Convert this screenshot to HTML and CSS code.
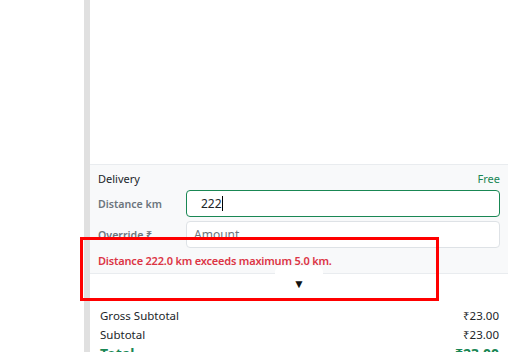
FILE: index.html
```html
<!DOCTYPE html>
<html>
<head>
<meta charset="utf-8">
<link rel="stylesheet" href="styles.css">
</head>
<body>
<div class="app">
  <div class="left"></div>
  <div class="divider"></div>
  <div class="panel">
    <div class="spacer"></div>
    <section class="delivery">
      <div class="head-row">
        <span class="title">Delivery</span>
        <span class="free">Free</span>
      </div>
      <div class="field-row">
        <span class="label">Distance km</span>
        <div class="input focused"><span class="val">222</span><span class="caret"></span></div>
      </div>
      <div class="field-row">
        <span class="label">Override ₹</span>
        <div class="input"><span class="ph">Amount</span></div>
      </div>
      <div class="error">Distance 222.0 km exceeds maximum 5.0 km.</div>
    </section>
    <div class="totals">
      <div class="trow"><span>Gross Subtotal</span><span>₹23.00</span></div>
      <div class="trow"><span>Subtotal</span><span>₹23.00</span></div>
      <div class="trow total"><span>Total</span><span>₹23.00</span></div>
    </div>
  </div>
</div>
<div class="scroll-btn">▼</div>
<div class="highlight"></div>
</body>
</html>
```
FILE: styles.css
```css
html, body {
  margin: 0;
  padding: 0;
  background: #fff;
  overflow: hidden;
}
body {
  width: 508px;
  height: 352px;
  font-family: "Noto Sans", "Open Sans", sans-serif;
  font-size: 12px;
  color: #212529;
  position: relative;
}
.app {
  display: flex;
  height: 352px;
}
.left {
  width: 84px;
  flex: none;
}
.divider {
  width: 6px;
  flex: none;
  background: #e0e0e0;
}
.panel {
  flex: 1;
  display: flex;
  flex-direction: column;
  min-width: 0;
}
.spacer {
  height: 164px;
  flex: none;
}
.delivery {
  background: #f8f9fa;
  border-top: 1px solid #e9ecef;
  border-bottom: 1px solid #e9ecef;
  padding: 6px 8px 4px 8px;
  height: 98px;
  box-sizing: content-box;
}
.head-row {
  display: flex;
  justify-content: space-between;
  line-height: 16px;
  font-size: 11px;
}
.title { color: #212529; }
.free { color: #198754; }
.field-row {
  display: flex;
  align-items: center;
  margin-top: 4px;
}
.head-row + .field-row { margin-top: 3px; }
.label {
  width: 88px;
  flex: none;
  font-size: 10.6px;
  font-weight: 600;
  color: #6c757d;
}
.input {
  flex: 1;
  height: 25px;
  border: 1px solid #dee2e6;
  border-radius: 4px;
  background: #fff;
  display: flex;
  align-items: center;
  padding-left: 7px;
  font-size: 12px;
}
.input.focused {
  border-color: #198754;
  padding-left: 14px;
}
.val { color: #212529; }
.caret {
  display: inline-block;
  width: 1px;
  height: 15px;
  background: #000;
}
.ph { color: #6c757d; }
.error {
  margin-top: 5px;
  color: #dc3545;
  font-size: 11px;
  font-weight: 600;
  letter-spacing: -0.2px;
  line-height: 16px;
}
.totals {
  padding: 32px 9px 0 10px;
}
.trow {
  display: flex;
  justify-content: space-between;
  line-height: 19px;
  font-size: 11.5px;
}
.trow.total {
  color: #198754;
  font-weight: 700;
  font-size: 14px;
}
.scroll-btn {
  position: absolute;
  left: 275px;
  top: 266px;
  width: 48px;
  height: 34px;
  background: #fff;
  border-radius: 6px;
  font-size: 12px;
  line-height: 36px;
  text-align: center;
  color: #111;
}
.highlight {
  position: absolute;
  left: 80px;
  top: 237px;
  width: 353px;
  height: 58px;
  border: 3px solid #ff0000;
}
```
